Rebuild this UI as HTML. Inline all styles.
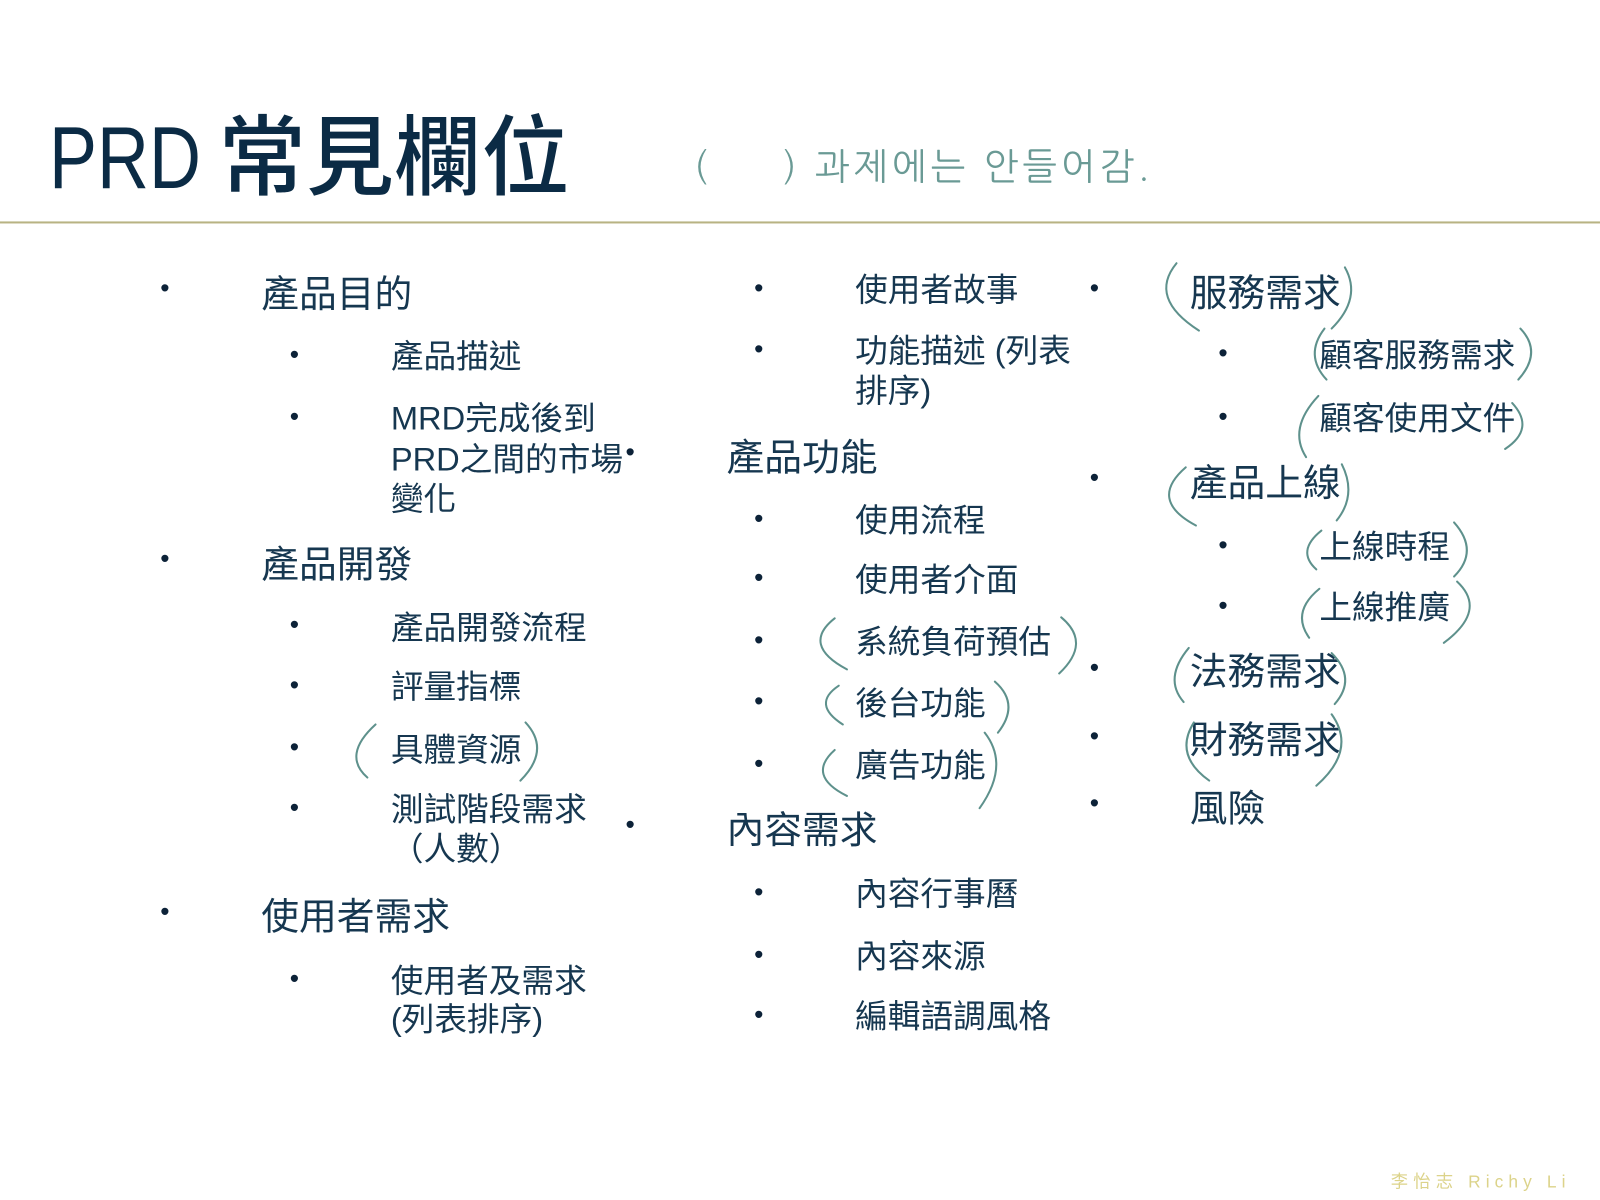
<!DOCTYPE html>
<html><head><meta charset="utf-8"><style>
html,body{margin:0;padding:0;background:#fff;width:1600px;height:1200px;overflow:hidden}
#w{position:absolute;left:0;top:0;width:1568px;height:1176px;transform:scale(1.0204);transform-origin:0 0;font-family:"Liberation Sans","Noto Sans CJK TC",sans-serif;color:#163750}
.t{position:absolute;white-space:nowrap;line-height:1}
.a{font-size:37px}
.b{font-size:32px}
.d{position:absolute;font-size:26px;line-height:1;color:#0c2238}
</style></head><body><div id="w">
<div class="t" style="left:48px;top:112px;font-size:86px;color:#0b2b45;transform:scaleX(0.82);transform-origin:0 0">PRD</div>
<div class="t" style="left:214px;top:112px;font-size:86px;color:#0b2b45;font-weight:500">常見欄位</div>
<div class="t" style="left:680px;top:146px;font-size:36px;color:#6a9a95;font-family:'NanumGothic','Noto Sans CJK KR',sans-serif;font-weight:300;letter-spacing:4px">(&nbsp;&nbsp;&nbsp;&nbsp;&nbsp;) 과제에는 안들어감.</div>
<div style="position:absolute;left:0;top:217px;width:1568px;height:2px;background:#b8b383"></div>

<!-- col1 -->
<div class="d" style="left:157px;top:269px">•</div><div class="t a" style="left:256px;top:270px">產品目的</div>
<div class="d" style="left:284px;top:334px">•</div><div class="t b" style="left:383px;top:333px">產品描述</div>
<div class="d" style="left:284px;top:395px">•</div><div class="t b" style="left:383px;top:394px">MRD完成後到</div>
<div class="t b" style="left:383px;top:434px">PRD之間的市場</div>
<div class="t b" style="left:383px;top:473px">變化</div>
<div class="d" style="left:157px;top:534px">•</div><div class="t a" style="left:256px;top:535px">產品開發</div>
<div class="d" style="left:284px;top:599px">•</div><div class="t b" style="left:383px;top:599px">產品開發流程</div>
<div class="d" style="left:284px;top:658px">•</div><div class="t b" style="left:383px;top:657px">評量指標</div>
<div class="d" style="left:284px;top:719px">•</div><div class="t b" style="left:383px;top:719px">具體資源</div>
<div class="d" style="left:284px;top:778px">•</div><div class="t b" style="left:383px;top:777px">測試階段需求</div>
<div class="t b" style="left:383px;top:816px">（人數）</div>
<div class="d" style="left:157px;top:880px">•</div><div class="t a" style="left:256px;top:880px">使用者需求</div>
<div class="d" style="left:284px;top:946px">•</div><div class="t b" style="left:383px;top:945px">使用者及需求</div>
<div class="t b" style="left:383px;top:983px">(列表排序)</div>

<!-- col2 -->
<div class="d" style="left:739px;top:269px">•</div><div class="t b" style="left:838px;top:268px">使用者故事</div>
<div class="d" style="left:739px;top:329px">•</div><div class="t b" style="left:838px;top:328px">功能描述 (列表</div>
<div class="t b" style="left:838px;top:367px">排序)</div>
<div class="d" style="left:613px;top:430px">•</div><div class="t a" style="left:712px;top:430px">產品功能</div>
<div class="d" style="left:739px;top:495px">•</div><div class="t b" style="left:838px;top:494px">使用流程</div>
<div class="d" style="left:739px;top:553px">•</div><div class="t b" style="left:838px;top:552px">使用者介面</div>
<div class="d" style="left:739px;top:614px">•</div><div class="t b" style="left:838px;top:613px">系統負荷預估</div>
<div class="d" style="left:739px;top:674px">•</div><div class="t b" style="left:838px;top:673px">後台功能</div>
<div class="d" style="left:739px;top:735px">•</div><div class="t b" style="left:838px;top:734px">廣告功能</div>
<div class="d" style="left:613px;top:795px">•</div><div class="t a" style="left:712px;top:795px">內容需求</div>
<div class="d" style="left:739px;top:861px">•</div><div class="t b" style="left:838px;top:860px">內容行事曆</div>
<div class="d" style="left:739px;top:922px">•</div><div class="t b" style="left:838px;top:921px">內容來源</div>
<div class="d" style="left:739px;top:981px">•</div><div class="t b" style="left:838px;top:980px">編輯語調風格</div>

<!-- col3 -->
<div class="d" style="left:1068px;top:269px">•</div><div class="t a" style="left:1166px;top:269px">服務需求</div>
<div class="d" style="left:1194px;top:333px">•</div><div class="t b" style="left:1293px;top:332px">顧客服務需求</div>
<div class="d" style="left:1194px;top:395px">•</div><div class="t b" style="left:1293px;top:394px">顧客使用文件</div>
<div class="d" style="left:1068px;top:455px">•</div><div class="t a" style="left:1166px;top:455px">產品上線</div>
<div class="d" style="left:1194px;top:521px">•</div><div class="t b" style="left:1293px;top:520px">上線時程</div>
<div class="d" style="left:1194px;top:580px">•</div><div class="t b" style="left:1293px;top:579px">上線推廣</div>
<div class="d" style="left:1068px;top:641px">•</div><div class="t a" style="left:1166px;top:640px">法務需求</div>
<div class="d" style="left:1068px;top:708px">•</div><div class="t a" style="left:1166px;top:707px">財務需求</div>
<div class="d" style="left:1068px;top:774px">•</div><div class="t a" style="left:1166px;top:774px">風險</div>

<div class="t" style="left:1363px;top:1150px;font-size:17px;color:#dcd38a;letter-spacing:5px">李怡志 Richy Li</div>

<svg style="position:absolute;left:0;top:0" width="1568" height="1176" fill="none" stroke="#5e918c" stroke-width="2" stroke-linecap="round">
<path d="M1153 258 Q1125 292 1175 324"/><path d="M1318 262 Q1335 292 1305 322"/>
<path d="M1298 322 Q1278 348 1300 372"/><path d="M1490 322 Q1512 345 1488 372"/>
<path d="M1292 388 Q1262 420 1280 448"/><path d="M1482 395 Q1505 420 1475 440"/>
<path d="M1162 458 Q1125 490 1172 515"/><path d="M1315 455 Q1330 485 1310 510"/>
<path d="M1295 520 Q1270 540 1290 558"/><path d="M1425 512 Q1450 540 1425 565"/>
<path d="M1293 577 Q1265 600 1283 625"/><path d="M1428 570 Q1458 598 1415 630"/>
<path d="M1165 635 Q1140 665 1160 688"/><path d="M1305 640 Q1330 665 1308 690"/>
<path d="M1170 708 Q1150 740 1185 765"/><path d="M1305 700 Q1330 735 1290 770"/>
<path d="M818 606 Q785 632 830 656"/><path d="M1040 605 Q1070 630 1038 660"/>
<path d="M822 672 Q795 690 826 710"/><path d="M975 668 Q1000 690 978 718"/>
<path d="M818 735 Q790 760 830 780"/><path d="M965 718 Q990 750 960 792"/>
<path d="M368 710 Q335 740 360 762"/><path d="M515 708 Q540 735 510 765"/>
</svg>
</div></body></html>
